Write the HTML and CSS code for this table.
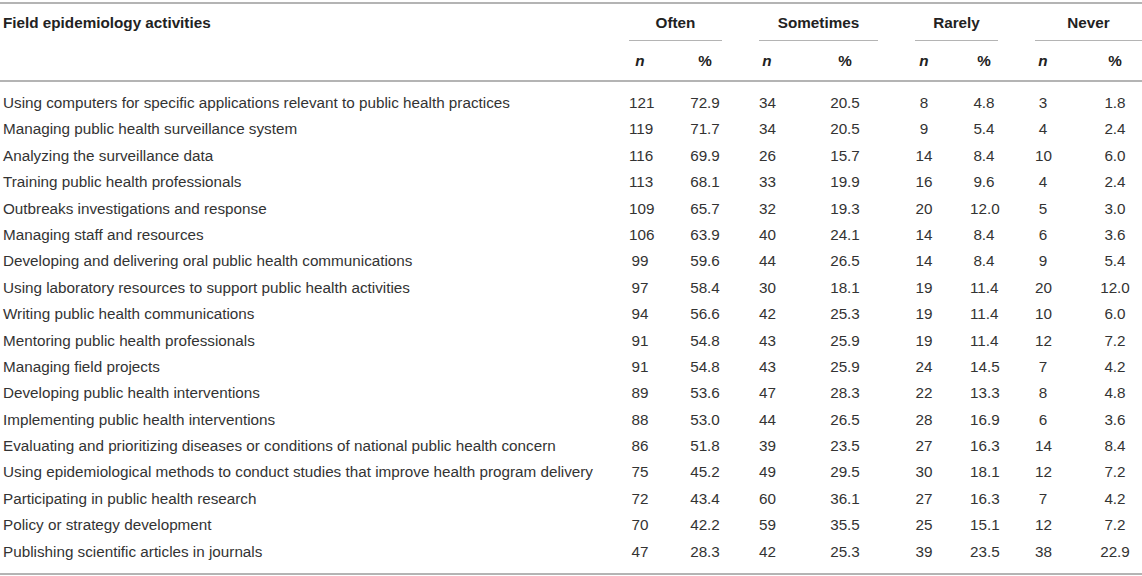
FILE: index.html
```html
<!DOCTYPE html>
<html lang="en">
<head>
<meta charset="utf-8">
<title>Field epidemiology activities</title>
<link rel="stylesheet" href="styles.css">
</head>
<body>
<div class="table">
  <div class="row head1">
    <div class="label">Field epidemiology activities</div>
    <div class="grp">Often</div>
    <div class="grp">Sometimes</div>
    <div class="grp">Rarely</div>
    <div class="grp last">Never</div>
  </div>
  <div class="row head2">
    <div class="label"></div>
    <div class="n">n</div><div>%</div>
    <div class="n">n</div><div>%</div>
    <div class="n">n</div><div>%</div>
    <div class="n">n</div><div>%</div>
  </div>
  <div class="body">
    <div class="row"><div class="label">Using computers for specific applications relevant to public health practices</div><div>121</div><div>72.9</div><div>34</div><div>20.5</div><div>8</div><div>4.8</div><div>3</div><div>1.8</div></div>
    <div class="row"><div class="label">Managing public health surveillance system</div><div>119</div><div>71.7</div><div>34</div><div>20.5</div><div>9</div><div>5.4</div><div>4</div><div>2.4</div></div>
    <div class="row"><div class="label">Analyzing the surveillance data</div><div>116</div><div>69.9</div><div>26</div><div>15.7</div><div>14</div><div>8.4</div><div>10</div><div>6.0</div></div>
    <div class="row"><div class="label">Training public health professionals</div><div>113</div><div>68.1</div><div>33</div><div>19.9</div><div>16</div><div>9.6</div><div>4</div><div>2.4</div></div>
    <div class="row"><div class="label">Outbreaks investigations and response</div><div>109</div><div>65.7</div><div>32</div><div>19.3</div><div>20</div><div>12.0</div><div>5</div><div>3.0</div></div>
    <div class="row"><div class="label">Managing staff and resources</div><div>106</div><div>63.9</div><div>40</div><div>24.1</div><div>14</div><div>8.4</div><div>6</div><div>3.6</div></div>
    <div class="row"><div class="label">Developing and delivering oral public health communications</div><div>99</div><div>59.6</div><div>44</div><div>26.5</div><div>14</div><div>8.4</div><div>9</div><div>5.4</div></div>
    <div class="row"><div class="label">Using laboratory resources to support public health activities</div><div>97</div><div>58.4</div><div>30</div><div>18.1</div><div>19</div><div>11.4</div><div>20</div><div>12.0</div></div>
    <div class="row"><div class="label">Writing public health communications</div><div>94</div><div>56.6</div><div>42</div><div>25.3</div><div>19</div><div>11.4</div><div>10</div><div>6.0</div></div>
    <div class="row"><div class="label">Mentoring public health professionals</div><div>91</div><div>54.8</div><div>43</div><div>25.9</div><div>19</div><div>11.4</div><div>12</div><div>7.2</div></div>
    <div class="row"><div class="label">Managing field projects</div><div>91</div><div>54.8</div><div>43</div><div>25.9</div><div>24</div><div>14.5</div><div>7</div><div>4.2</div></div>
    <div class="row"><div class="label">Developing public health interventions</div><div>89</div><div>53.6</div><div>47</div><div>28.3</div><div>22</div><div>13.3</div><div>8</div><div>4.8</div></div>
    <div class="row"><div class="label">Implementing public health interventions</div><div>88</div><div>53.0</div><div>44</div><div>26.5</div><div>28</div><div>16.9</div><div>6</div><div>3.6</div></div>
    <div class="row"><div class="label">Evaluating and prioritizing diseases or conditions of national public health concern</div><div>86</div><div>51.8</div><div>39</div><div>23.5</div><div>27</div><div>16.3</div><div>14</div><div>8.4</div></div>
    <div class="row"><div class="label">Using epidemiological methods to conduct studies that improve health program delivery</div><div>75</div><div>45.2</div><div>49</div><div>29.5</div><div>30</div><div>18.1</div><div>12</div><div>7.2</div></div>
    <div class="row"><div class="label">Participating in public health research</div><div>72</div><div>43.4</div><div>60</div><div>36.1</div><div>27</div><div>16.3</div><div>7</div><div>4.2</div></div>
    <div class="row"><div class="label">Policy or strategy development</div><div>70</div><div>42.2</div><div>59</div><div>35.5</div><div>25</div><div>15.1</div><div>12</div><div>7.2</div></div>
    <div class="row"><div class="label">Publishing scientific articles in journals</div><div>47</div><div>28.3</div><div>42</div><div>25.3</div><div>39</div><div>23.5</div><div>38</div><div>22.9</div></div>
  </div>
</div>
</body>
</html>
```

FILE: styles.css
```css
html, body {
  margin: 0;
  padding: 0;
  background: #ffffff;
}

body {
  font-family: "Liberation Sans", Arial, sans-serif;
  font-size: 15.25px;
  color: #333333;
}

.table {
  width: 1142px;
  margin-top: 2px;
  border-top: 2px solid #b4b4b4;
}

.row {
  display: grid;
  grid-template-columns: 589px 22px 34px 16px 66px 18px 28px 16px 54px;
  column-gap: 37px;
  padding-left: 3px;
  text-align: center;
  white-space: nowrap;
}

.row .label {
  text-align: left;
}

.head1,
.head2 {
  font-weight: bold;
  color: #222222;
  line-height: 18px;
}

.head1 > div {
  padding: 10px 0 8px;
}

.grp {
  grid-column: span 2;
  border-bottom: 1px solid #b4b4b4;
}

.head2 {
  border-bottom: 2px solid #b4b4b4;
}

.head2 > div {
  padding: 11px 0 10px;
}

.n {
  font-style: italic;
}

.body {
  padding: 8px 0;
  border-bottom: 2px solid #b4b4b4;
}

.body .row {
  height: 26.4px;
  line-height: 26.4px;
}
```
